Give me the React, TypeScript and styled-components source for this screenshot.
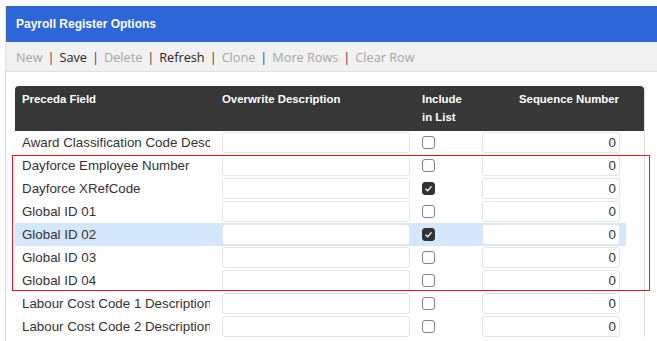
import React from "react";
import styled, { createGlobalStyle } from "styled-components";

const Global = createGlobalStyle`
  html, body { margin: 0; padding: 0; background: #fff; }
  body { font-family: Arial, "Liberation Sans", sans-serif; }
`;

const Page = styled.div`
  position: relative;
  width: 657px;
  height: 341px;
  overflow: hidden;
`;

const Panel = styled.div`
  margin: 6px 0 0 5px;
  border-left: 1px solid #e2e2e2;
  height: 335px;
`;

const TitleBar = styled.div`
  height: 36px;
  background: #2c66d9;
  color: #fff;
  font: bold 12px Arial, "Liberation Sans", sans-serif;
  display: flex;
  align-items: center;
  padding-left: 10px;
`;

const Toolbar = styled.div`
  height: 29px;
  background: #f0f1f0;
  border-bottom: 1px solid #dfe0df;
  display: flex;
  align-items: center;
  padding-left: 10px;
  font: 12.7px "Open Sans", sans-serif;
`;

const ToolItem = styled.span<{ $enabled?: boolean }>`
  color: ${(p) => (p.$enabled ? "#2a2222" : "#a6a6a6")};
`;

const Sep = styled.span`
  color: #3a3a3a;
  margin: 0 5px;
`;

const Body = styled.div`
  padding: 14px 0 0 9px;
`;

const TableWrap = styled.div`
  width: 629px;
  height: 251px;
  border-right: 1px solid #dedede;
  overflow: hidden;
`;

const cols = "200px 200px 60px 151px 18px";

const HeaderRow = styled.div`
  display: grid;
  grid-template-columns: ${cols};
  height: 45px;
  background: #373737;
  border-radius: 4px 4px 0 0;
  color: #fff;
  font: bold 11.4px Arial, "Liberation Sans", sans-serif;
  line-height: 18px;
  padding-top: 4px;
  box-sizing: border-box;
`;

const HeadCell = styled.div<{ $right?: boolean }>`
  padding: 0 7px;
  text-align: ${(p) => (p.$right ? "right" : "left")};
`;

const Row = styled.div<{ $selected?: boolean }>`
  display: grid;
  grid-template-columns: 200px 200px 60px 151px;
  height: 23px;
  align-items: center;
  background: ${(p) => (p.$selected ? "#d5e7fc" : "transparent")};
  width: 611px;
`;

const FieldName = styled.div`
  width: 195px;
  box-sizing: border-box;
  padding-left: 7px;
  font-size: 13.33px;
  color: #333;
  white-space: nowrap;
  overflow: hidden;
`;

const TextBox = styled.div<{ $w: number }>`
  margin-left: 7px;
  width: ${(p) => p.$w}px;
  height: 21px;
  box-sizing: border-box;
  border: 1px solid #e4e4e4;
  border-radius: 3px;
  background: #fff;
  font-size: 13.33px;
  color: #333;
  text-align: right;
  line-height: 19px;
  padding-right: 3px;
`;

const Check = styled.div<{ $checked?: boolean }>`
  margin-left: 7px;
  width: 13px;
  height: 13px;
  box-sizing: border-box;
  border-radius: 3px;
  border: 1px solid ${(p) => (p.$checked ? "#333" : "#847c8e")};
  background: ${(p) => (p.$checked ? "#333" : "#fff")};
  display: flex;
  align-items: center;
  justify-content: center;
`;

const Highlight = styled.div`
  position: absolute;
  left: 12px;
  top: 155px;
  width: 638px;
  height: 136px;
  box-sizing: border-box;
  border: 1px solid #e8141e;
  pointer-events: none;
`;

const rows = [
  { name: "Award Classification Code Description", checked: false },
  { name: "Dayforce Employee Number", checked: false },
  { name: "Dayforce XRefCode", checked: true },
  { name: "Global ID 01", checked: false },
  { name: "Global ID 02", checked: true, selected: true },
  { name: "Global ID 03", checked: false },
  { name: "Global ID 04", checked: false },
  { name: "Labour Cost Code 1 Description", checked: false },
  { name: "Labour Cost Code 2 Description", checked: false },
];

const tools: [string, boolean][] = [
  ["New", false],
  ["Save", true],
  ["Delete", false],
  ["Refresh", true],
  ["Clone", false],
  ["More Rows", false],
  ["Clear Row", false],
];

export default function App() {
  return (
    <Page>
      <Global />
      <Panel>
        <TitleBar>Payroll Register Options</TitleBar>
        <Toolbar>
          {tools.map(([t, en], i) => (
            <React.Fragment key={t}>
              {i > 0 && <Sep>|</Sep>}
              <ToolItem $enabled={en}>{t}</ToolItem>
            </React.Fragment>
          ))}
        </Toolbar>
        <Body>
          <TableWrap>
            <HeaderRow>
              <HeadCell>Preceda Field</HeadCell>
              <HeadCell>Overwrite Description</HeadCell>
              <HeadCell>
                Include
                <br />
                in List
              </HeadCell>
              <HeadCell $right>Sequence Number</HeadCell>
              <div />
            </HeaderRow>
            {rows.map((r) => (
              <Row key={r.name} $selected={r.selected}>
                <FieldName>{r.name}</FieldName>
                <TextBox $w={188} />
                <Check $checked={r.checked}>
                  {r.checked && (
                    <svg width="9" height="9" viewBox="0 0 9 9">
                      <path d="M1.5 4.8 L3.6 6.8 L7.6 2.4" fill="none" stroke="#fff" strokeWidth="1.3" />
                    </svg>
                  )}
                </Check>
                <TextBox $w={138}>0</TextBox>
              </Row>
            ))}
          </TableWrap>
        </Body>
      </Panel>
      <Highlight />
    </Page>
  );
}
